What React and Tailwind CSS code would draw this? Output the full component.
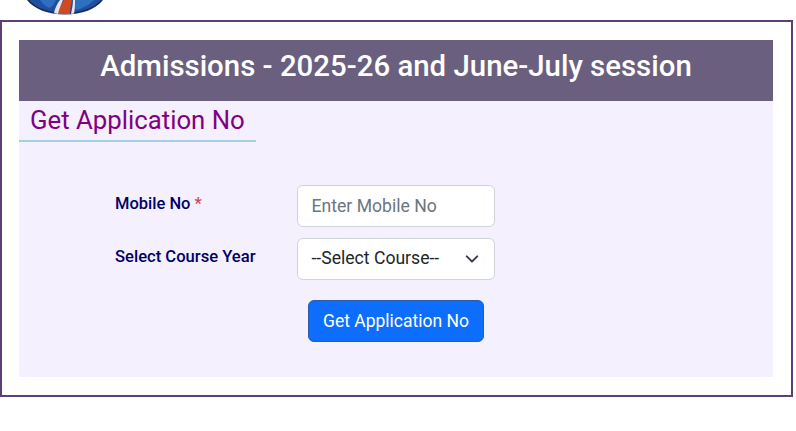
import React from "react";

const Logo = () => (
  <svg width="84" height="15" viewBox="0 0 84 15" className="block">
    <path d="M5 0 H81 C74 9 60 14.5 43 14.5 C26 14.5 12 9 5 0 Z" fill="#1a2a58" />
    <path d="M7 0 H79 C72 8 58 13 43 13 C28 13 14 8 7 0 Z" fill="#1f4f9f" />
    <path d="M18 0 H34 C32 4 30 7 27 8 C23 6 20 3 18 0 Z" fill="#2f6fc0" />
    <path d="M52 0 H72 C68 4 62 8 54 10 C52 6 52 3 52 0 Z" fill="#2f6fc0" />
    <path d="M36 14 C37 9 39 4 42 0 L50 0 C49 5 48 9 48 14 Z" fill="#cf4a22" />
    <path d="M32 13 C33 8 35 4 38 0 L41 0 C39 5 37 9 36 14 Z" fill="#e8e4ea" />
    <path d="M49 14 C50 9 51 4 51 0 L53 0 C53 5 53 9 52 13.5 Z" fill="#e6e6ee" />
  </svg>
);

const App = () => {
  return (
    <div className="w-[796px] h-[431px] bg-white font-['Roboto',sans-serif] overflow-hidden">
      <div className="h-[15px] pl-[22px]">
        <Logo />
      </div>
      <div className="h-[5px]" />
      <div className="w-[793px] h-[377px] border-2 border-[#5b3f75] pt-[18px] pl-[17px] pr-[18px]">
        <div className="bg-[#f4f0fe] h-[337px]">
          <h1 className="bg-[#6a5f7e] h-[61px] pb-[8px] flex items-center justify-center text-white text-[29.4px] font-medium">
            Admissions - 2025-26 and June-July session
          </h1>
          <h2 className="w-[237px] h-[41px] border-b-2 border-[#a5cfe4] pl-[11px] pt-[3px] text-[#800080] text-[25.75px] leading-[33px]">
            Get Application No
          </h2>
          <div className="pt-[43px] pl-[96px]">
            <div className="flex h-[42px] mb-[11px]">
              <label className="w-[182px] pt-[9px] text-[16.5px] leading-[20px] font-medium text-[#000066]">
                Mobile No <span className="text-[#c8475a]">*</span>
              </label>
              <input
                placeholder="Enter Mobile No"
                className="w-[198px] h-[42px] pl-[13.5px] pr-[14px] bg-white border border-[#ced4da] rounded-md text-[17.6px] outline-none placeholder:text-[#6c757d]"
              />
            </div>
            <div className="flex h-[42px] mb-[20px]">
              <label className="w-[182px] pt-[9px] text-[16.6px] leading-[20px] font-medium text-[#000066]">
                Select Course Year
              </label>
              <div className="w-[198px] h-[42px] pl-[13.5px] pr-[15px] pb-[1px] bg-white border border-[#ced4da] rounded-md flex items-center justify-between text-[17.6px] text-[#212529]">
                <span>--Select Course--</span>
                <svg width="14" height="14" viewBox="0 0 16 16" fill="none" stroke="#343a40" strokeWidth="2.2" strokeLinecap="round" strokeLinejoin="round">
                  <path d="M2 5l6 6 6-6" />
                </svg>
              </div>
            </div>
            <div className="pl-[193px]">
              <button className="w-[176px] h-[42px] bg-[#0d6efd] border border-[#2a5fa8] rounded-md text-white text-[17.5px]">
                Get Application No
              </button>
            </div>
          </div>
        </div>
      </div>
    </div>
  );
};

export default App;
